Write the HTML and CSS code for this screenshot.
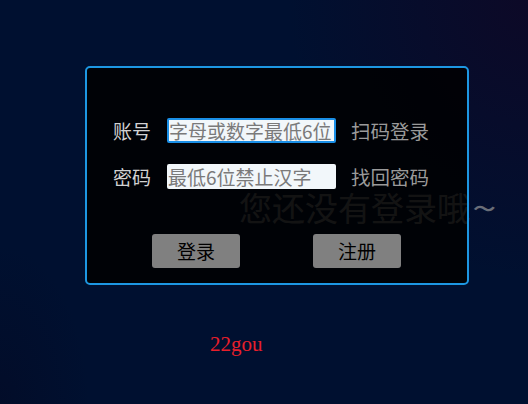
FILE: index.html
```html
<!DOCTYPE html>
<html lang="zh-CN">
<head>
<meta charset="utf-8">
<title>登录</title>
<link rel="stylesheet" href="styles.css">
</head>
<body>
<div class="page">
  <div class="card">
    <div class="row">
      <span class="label">账号</span>
      <input class="field focused" type="text" placeholder="字母或数字最低6位">
      <a class="link">扫码登录</a>
    </div>
    <div class="row">
      <span class="label">密码</span>
      <input class="field" type="password" placeholder="最低6位禁止汉字">
      <a class="link">找回密码</a>
    </div>
    <div class="buttons">
      <button class="btn">登录</button>
      <button class="btn">注册</button>
    </div>
  </div>
  <div class="notice">您还没有登录哦<span class="tilde">~</span></div>
  <div class="brand">22gou</div>
</div>
</body>
</html>
```
FILE: styles.css
```css
html, body {
  margin: 0;
  padding: 0;
  height: 100%;
}
body {
  background: #001030;
  background-image: radial-gradient(ellipse 240px 280px at 100% 0%, rgba(14, 8, 38, 0.9), rgba(14, 8, 38, 0) 100%),
    radial-gradient(ellipse 90px 160px at 0% 100%, rgba(4, 10, 36, 0.6), rgba(4, 10, 36, 0) 100%);
  font-family: "Noto Sans CJK SC", "Noto Sans", sans-serif;
  overflow: hidden;
}
.page {
  position: relative;
  width: 528px;
  height: 404px;
  padding-top: 66px;
  box-sizing: border-box;
}
.card {
  position: relative;
  z-index: 1;
  margin-left: 85px;
  width: 384px;
  height: 219px;
  box-sizing: border-box;
  border: 2px solid #1d97e2;
  border-radius: 5px;
  background: rgba(0, 0, 0, 0.86);
  padding: 50px 0 0 26px;
  display: flex;
  flex-direction: column;
}
.row {
  display: flex;
  align-items: center;
  height: 25px;
  margin-bottom: 21px;
}
.label {
  width: 54px;
  color: #d2d2d2;
  font-size: 19px;
  line-height: 25px;
}
.field {
  width: 169px;
  height: 25px;
  box-sizing: border-box;
  margin: 0;
  padding: 0 0 0 1px;
  border: none;
  border-radius: 2px;
  background: #f2f7fa;
  font-family: "Noto Sans CJK SC", "Noto Sans", sans-serif;
  font-size: 19px;
  outline: none;
  color: #333;
}
.field.focused {
  border: 2px solid #1a8fe6;
  padding-left: 0;
}
.field::placeholder {
  color: #7a7a7a;
}
.link {
  margin-left: 15px;
  color: #9a9a9a;
  font-size: 19.5px;
  line-height: 25px;
}
.buttons {
  display: flex;
  gap: 73px;
  margin-top: 24px;
  padding-left: 39px;
}
.btn {
  width: 88px;
  height: 34px;
  margin: 0;
  padding: 0;
  border: none;
  border-radius: 3px;
  background: #808080;
  color: #000;
  font-family: "Noto Sans CJK SC", "Noto Sans", sans-serif;
  font-size: 19px;
  line-height: 34px;
}
.notice {
  position: absolute;
  z-index: 0;
  left: 239px;
  top: 189px;
  font-size: 33px;
  line-height: 36px;
  color: #8a8a8a;
  white-space: nowrap;
}
.tilde {
  display: inline-block;
  margin-left: 2px;
  font-size: 34px;
  color: #6a6e78;
  transform: scaleX(1.3);
  transform-origin: left center;
}
.brand {
  margin: 47px 0 0 210px;
  color: #e81f2b;
  font-family: "Liberation Serif", serif;
  font-size: 21px;
  line-height: 24px;
}
```
